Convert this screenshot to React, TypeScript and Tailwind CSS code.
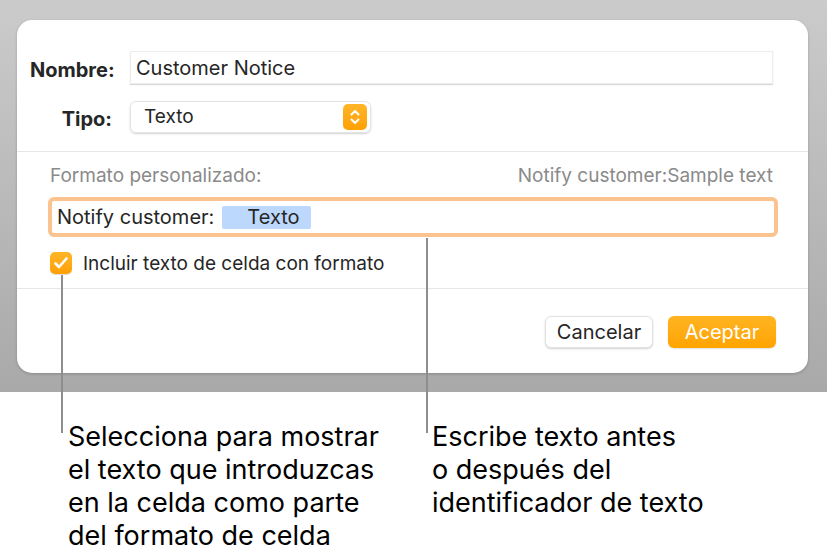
import React from "react";

function Stepper() {
  return (
    <div className="flex h-[26px] w-[24px] items-center justify-center rounded-[5px] bg-gradient-to-b from-[#ffb526] to-[#ffa000]">
      <svg width="12" height="18" viewBox="0 0 12 18" fill="none" stroke="white" strokeWidth="2" strokeLinecap="round" strokeLinejoin="round">
        <path d="M2.5 6.5 6 3l3.5 3.5" />
        <path d="M2.5 11.5 6 15l3.5-3.5" />
      </svg>
    </div>
  );
}

function Checkbox() {
  return (
    <div className="flex h-[22px] w-[22px] items-center justify-center rounded-[5px] bg-gradient-to-b from-[#ffb526] to-[#ffa000] shadow-[0_1px_1px_rgba(0,0,0,0.15)]">
      <svg width="16" height="14" viewBox="0 0 16 14" fill="none" stroke="white" strokeWidth="2.6" strokeLinecap="round" strokeLinejoin="round">
        <path d="M2.5 7.5 6 11l7.5-8.5" />
      </svg>
    </div>
  );
}

export default function App() {
  return (
    <div className="relative h-[556px] w-[827px] overflow-hidden bg-white font-['Inter','Liberation_Sans',sans-serif] text-[#262626]">
      <div className="h-[392px] bg-gradient-to-b from-[#cbcbcb] to-[#a9a9a9] pl-[17px] pr-[19px] pt-5">
        <div className="flex h-[353px] flex-col rounded-[15px] bg-white shadow-[0_1px_3px_rgba(0,0,0,0.2)]">
          {/* name + type */}
          <div className="grid grid-cols-[82px_1fr] items-center gap-x-[18px] gap-y-[17px] border-b border-[#e6e6e6] pb-[18px] pl-[13px] pr-[35px] pt-[31px]">
            <span className="translate-y-[2px] text-right text-[20px] font-bold">Nombre:</span>
            <div className="flex h-[33px] items-center border border-[#ececec] pl-[5px] text-[20px] shadow-[0_1px_1px_rgba(0,0,0,0.15)]">
              Customer Notice
            </div>
            <span className="translate-y-[2px] text-right text-[20px] font-bold">Tipo:</span>
            <div className="flex h-[32px] w-[241px] items-center justify-between rounded-[6px] border border-[#e4e4e4] pl-[13px] pr-[3px] text-[19px] shadow-[0_1px_2px_rgba(0,0,0,0.18)]">
              <span>Texto</span>
              <Stepper />
            </div>
          </div>

          {/* custom format */}
          <div className="border-b border-[#e6e6e6] pb-[14px] pl-[31px] pr-[30px] pt-[14px]">
            <div className="flex h-[20px] items-center justify-between pl-[2px] pr-[5px] text-[19px] text-[#8a8a8a]">
              <span>Formato personalizado:</span>
              <span>Notify customer:Sample text</span>
            </div>
            <div className="mt-[11px] flex h-[40px] items-center gap-[8px] rounded-[6px] border-[4px] border-[#fbc38f] pl-[5px] text-[20px]">
              <span>Notify customer:</span>
              <span className="flex h-[23px] items-center rounded-[2px] bg-[#bdd8fd] pl-[25px] pr-[11px]">Texto</span>
            </div>
            <div className="mt-[15px] flex h-[22px] items-center gap-[11px] pl-[2px]">
              <Checkbox />
              <span className="translate-y-[1px] text-[19px] leading-[22px]">Incluir texto de celda con formato</span>
            </div>
          </div>

          {/* buttons */}
          <div className="flex justify-end gap-[15px] pr-[32px] pt-[27px]">
            <button className="h-[32px] w-[108px] rounded-[6px] border border-[#e2e2e2] bg-white text-[20px] text-[#262626] shadow-[0_1px_2px_rgba(0,0,0,0.18)]">
              Cancelar
            </button>
            <button className="h-[32px] w-[108px] rounded-[6px] bg-gradient-to-b from-[#ffb41f] to-[#ffa400] text-[20px] text-white shadow-[0_1px_2px_rgba(0,0,0,0.12)]">
              Aceptar
            </button>
          </div>
        </div>
      </div>

      {/* callouts */}
      <div className="flex pl-[68px] pt-[28px] text-[27px] leading-[33px] text-black">
        <p className="w-[364px]">
          Selecciona para mostrar
          <br />
          el texto que introduzcas
          <br />
          en la celda como parte
          <br />
          del formato de celda
        </p>
        <p>
          Escribe texto antes
          <br />
          o después del
          <br />
          identificador de texto
        </p>
      </div>

      <div className="absolute left-[61px] top-[275px] h-[158px] w-[2px] bg-[#8e8e8e]" />
      <div className="absolute left-[426px] top-[238px] h-[195px] w-[2px] bg-[#8e8e8e]" />
    </div>
  );
}
